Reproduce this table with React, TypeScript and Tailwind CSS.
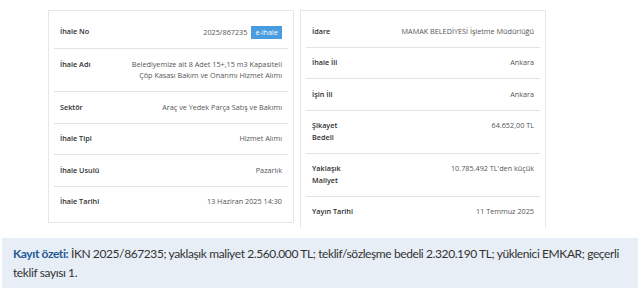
type Row = {
  label: string;
  value: string;
  badge?: string;
};

const leftRows: Row[] = [
  { label: 'İhale No', value: '2025/867235', badge: 'e-ihale' },
  { label: 'İhale Adı', value: 'Belediyemize ait 8 Adet 15+,15 m3 Kapasiteli Çöp Kasası Bakım ve Onarımı Hizmet Alımı' },
  { label: 'Sektör', value: 'Araç ve Yedek Parça Satış ve Bakımı' },
  { label: 'İhale Tipi', value: 'Hizmet Alımı' },
  { label: 'İhale Usulü', value: 'Pazarlık' },
  { label: 'İhale Tarihi', value: '13 Haziran 2025 14:30' },
];

const rightRows: Row[] = [
  { label: 'İdare', value: 'MAMAK BELEDİYESİ İşletme Müdürlüğü' },
  { label: 'İhale İli', value: 'Ankara' },
  { label: 'İşin İli', value: 'Ankara' },
  { label: 'Şikayet Bedeli', value: '64.652,00 TL' },
  { label: 'Yaklaşık Maliyet', value: "10.785.492 TL'den küçük" },
  { label: 'Yayın Tarihi', value: '11 Temmuz 2025' },
];

const InfoCard = ({ rows, labelWidth }: { rows: Row[]; labelWidth: string }) => (
  <div className="w-[246px] border border-[#e6e6e6] bg-white px-[5px] py-[5px]">
    {rows.map((row, i) => (
      <div
        key={row.label}
        className={`flex items-start px-[6px] py-[9.5px] ${i < rows.length - 1 ? 'border-b border-[#e4e4e4]' : ''}`}
      >
        <div className={`${labelWidth} shrink-0 font-semibold text-[#2f2f2f]`}>{row.label}</div>
        <div className="flex-1 text-right text-[#555]">
          {row.value}
          {row.badge && (
            <span className="ml-[4px] inline-block bg-[#4a9ce0] px-[4px] leading-[13px] text-white">
              {row.badge}
            </span>
          )}
        </div>
      </div>
    ))}
  </div>
);

export default function App() {
  return (
    <div className="h-[293px] w-[640px] overflow-hidden bg-white">
      <div
        className="flex h-[228px] items-start gap-[6px] overflow-hidden pl-[48px] pt-[10px] text-[7.25px] leading-[11.5px]"
        style={{ fontFamily: '"Open Sans", sans-serif' }}
      >
        <InfoCard rows={leftRows} labelWidth="w-[68px]" />
        <InfoCard rows={rightRows} labelWidth="w-[44px]" />
      </div>
      <div
        className="mx-[2px] mt-[10px] bg-[#e8eef6] pl-[11px] pr-[8px] py-[6px] text-[12px] leading-[19px] tracking-[-0.4px] text-[#333]"
        style={{ fontFamily: 'Lato, sans-serif' }}
      >
        <span className="font-bold text-[#1f5a96]">Kayıt özeti:</span> İKN 2025/867235; yaklaşık maliyet 2.560.000 TL;
        teklif/sözleşme bedeli 2.320.190 TL; yüklenici EMKAR; geçerli teklif sayısı 1.
      </div>
    </div>
  );
}
